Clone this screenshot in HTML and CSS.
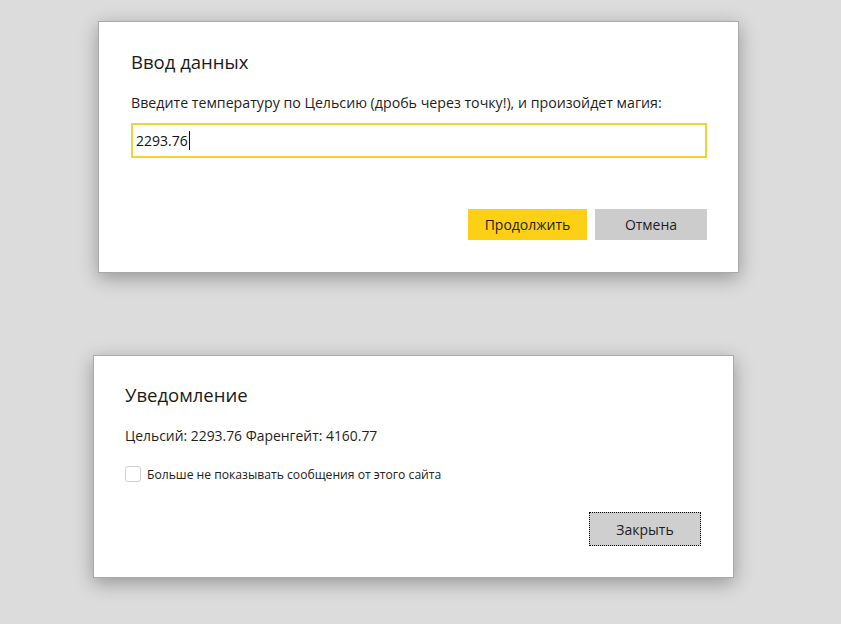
FILE: index.html
```html
<!DOCTYPE html>
<html lang="ru">
<head>
<meta charset="utf-8">
<link rel="stylesheet" href="styles.css">
</head>
<body>
<div class="dialog dialog-prompt">
  <div class="title">Ввод данных</div>
  <div class="message message-prompt">Введите температуру по Цельсию (дробь через точку!), и произойдет магия:</div>
  <div class="field"><span class="field-value">2293.76</span><span class="caret"></span></div>
  <div class="actions">
    <button class="btn btn-primary">Продолжить</button>
    <button class="btn btn-secondary">Отмена</button>
  </div>
</div>
<div class="dialog dialog-alert">
  <div class="title">Уведомление</div>
  <div class="message">Цельсий: 2293.76 Фаренгейт: 4160.77</div>
  <label class="check-row"><span class="checkbox"></span><span class="check-label">Больше не показывать сообщения от этого сайта</span></label>
  <div class="actions actions-alert">
    <button class="btn btn-secondary btn-focused">Закрыть</button>
  </div>
</div>
</body>
</html>
```

FILE: styles.css
```css
html, body {
  margin: 0;
  padding: 0;
}
body {
  background: #dcdcdc;
  font-family: "Open Sans", "Noto Sans", sans-serif;
  color: #1e1e1e;
  width: 841px;
  height: 624px;
  overflow: hidden;
  padding-top: 21px;
  box-sizing: border-box;
}
.dialog {
  width: 641px;
  box-sizing: border-box;
  background: #fff;
  border: 1px solid #a9a9a9;
  box-shadow: 0 5px 18px rgba(0, 0, 0, 0.32);
  display: flex;
  flex-direction: column;
  padding-left: 32px;
  padding-right: 31px;
}
.dialog-prompt {
  margin-left: 98px;
  padding-top: 28px;
  padding-bottom: 32px;
}
.dialog-alert {
  margin-left: 93px;
  margin-top: 82px;
  padding-top: 27px;
  padding-bottom: 31px;
  padding-left: 31px;
  padding-right: 32px;
}
.title {
  font-size: 18.5px;
  line-height: 24px;
  height: 24px;
  color: #1a1a1a;
}
.message {
  font-size: 13.9px;
  line-height: 20px;
  height: 20px;
  margin-top: 19px;
  color: #1e1e1e;
}
.message-prompt {
  font-size: 14.2px;
}
.field {
  margin-top: 10px;
  height: 35px;
  box-sizing: border-box;
  border: 2px solid #f5d233;
  display: flex;
  align-items: center;
  padding-left: 3px;
  font-size: 14px;
  color: #111;
}
.caret {
  width: 1px;
  height: 19px;
  background: #111;
  margin-left: 1px;
}
.actions {
  display: flex;
  justify-content: flex-end;
  gap: 8px;
  margin-top: 51px;
}
.btn {
  font-family: inherit;
  font-size: 14px;
  color: #1e1e1e;
  border: 0;
  height: 31px;
  padding: 0;
  cursor: default;
}
.btn-primary {
  background: #fdd015;
  width: 119px;
}
.btn-secondary {
  background: #cccccc;
  width: 112px;
}
.check-row {
  display: flex;
  align-items: center;
  height: 20px;
  margin-top: 18px;
  gap: 6px;
}
.checkbox {
  width: 14px;
  height: 14px;
  border: 1px solid #d0d0d0;
  border-radius: 3px;
  background: #fff;
}
.check-label {
  font-size: 12.15px;
  color: #222;
}
.actions-alert {
  margin-top: 28px;
}
.btn-focused {
  height: 34px;
  background: #cfcfcf;
  border: 1px dotted #000;
  box-sizing: border-box;
}
```
